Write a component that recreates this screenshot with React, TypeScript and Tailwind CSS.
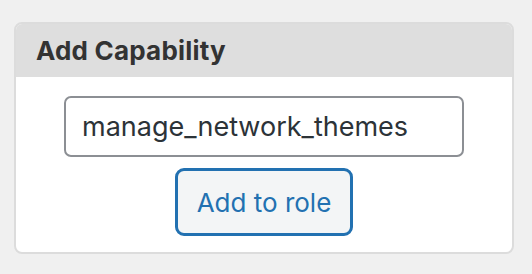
import React, { useState } from "react";

export default function App() {
  const [cap, setCap] = useState("manage_network_themes");

  return (
    <div
      className="w-[532px] h-[274px] bg-[#f0f0f0] pt-[22px] pl-[14px]"
      style={{ fontFamily: "Inter, 'Noto Sans', sans-serif" }}
    >
      {/* Panel */}
      <div className="w-[500px] rounded-[8px] border-2 border-[#dcdcdc] bg-white overflow-hidden">
        <div className="h-[53px] bg-[#dedede] flex items-center pl-[20px]">
          <h2 className="text-[26px] font-bold text-[#333] leading-none tracking-[0.2px]">
            Add Capability
          </h2>
        </div>

        <div className="flex flex-col items-center pt-[19px] pb-[16px] gap-[11px]">
          <input
            value={cap}
            onChange={(e) => setCap(e.target.value)}
            className="w-[400px] h-[61px] rounded-[7px] border-2 border-[#8c8f94] px-[16px] text-[27px] text-[#2c3338] outline-none"
          />
          <button className="w-[178px] h-[68px] rounded-[9px] border-[3px] border-[#2271b1] bg-[#f3f5f6] text-[26px] text-[#2271b1]">
            Add to role
          </button>
        </div>
      </div>
    </div>
  );
}
